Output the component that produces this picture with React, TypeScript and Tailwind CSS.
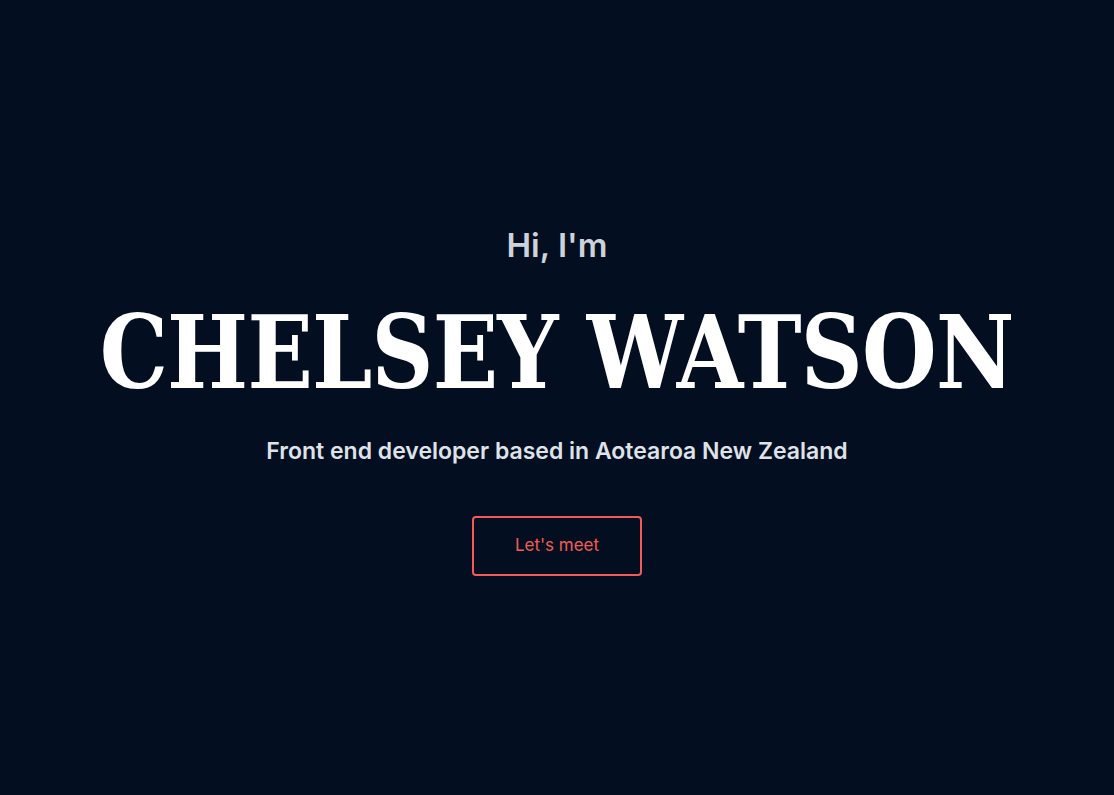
export default function App() {
  return (
    <div className="min-h-screen w-full bg-[#030f21] flex flex-col items-center justify-center font-['Inter',sans-serif]">
      <div className="flex flex-col items-center pt-[10px]">
        <p className="text-[33px] font-semibold text-[#cdd2db] leading-none">Hi, I'm</p>
        <h1 className="mt-[40px] text-[101px] font-bold text-white leading-none tracking-[-1px] whitespace-nowrap [transform:scaleX(0.85)] font-['DejaVu_Serif',serif]">
          CHELSEY WATSON
        </h1>
        <p className="mt-[37px] text-[23px] font-semibold text-[#dfe2e8] leading-none">
          Front end developer based in Aotearoa New Zealand
        </p>
        <button className="mt-[53px] w-[170px] h-[60px] rounded-[4px] border-2 border-[#f25c54] text-[#f25c54] text-[17px]">
          Let's meet
        </button>
      </div>
    </div>
  );
}
